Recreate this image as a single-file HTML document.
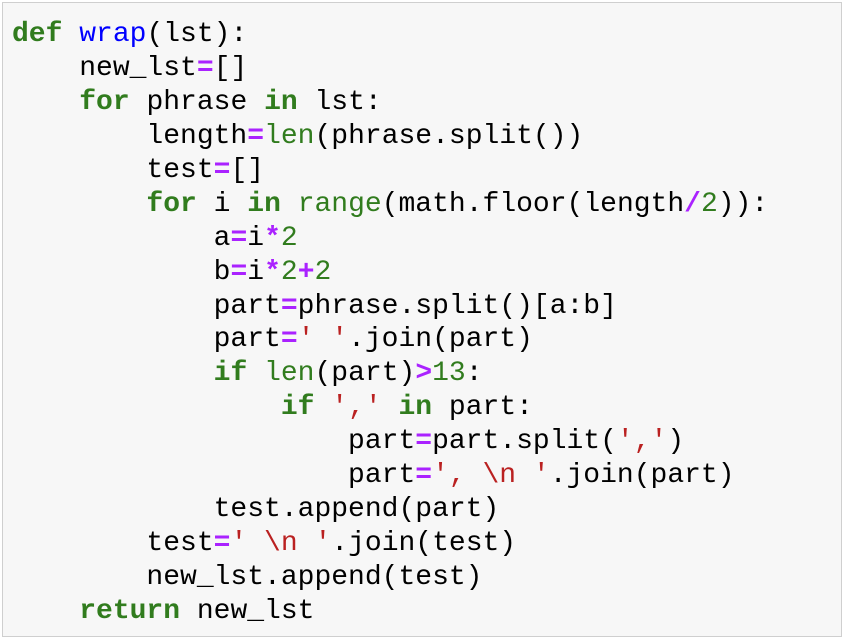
<!DOCTYPE html>
<html><head><style>
html,body{margin:0;padding:0;background:#fff;width:844px;height:640px;overflow:hidden}
.cell{position:absolute;left:2px;top:2px;width:840px;height:635px;border:1px solid #cfcfcf;background:#f7f7f7;box-sizing:border-box}
pre{margin:0;position:absolute;left:9px;top:15px;font-family:"Liberation Mono",monospace;font-size:28px;line-height:33.94px;color:#000}
.k{color:#317c1e;font-weight:bold}
.f{color:#0000ff}
.o{color:#aa22ff;font-weight:bold}
.s{color:#ba2121}
.n{color:#317c1e}
.b{color:#317c1e}
</style></head><body>
<div class="cell"><pre><span class="k">def</span> <span class="f">wrap</span>(lst):
    new_lst<span class="o">=</span>[]
    <span class="k">for</span> phrase <span class="k">in</span> lst:
        length<span class="o">=</span><span class="b">len</span>(phrase.split())
        test<span class="o">=</span>[]
        <span class="k">for</span> i <span class="k">in</span> <span class="b">range</span>(math.floor(length<span class="o">/</span><span class="n">2</span>)):
            a<span class="o">=</span>i<span class="o">*</span><span class="n">2</span>
            b<span class="o">=</span>i<span class="o">*</span><span class="n">2</span><span class="o">+</span><span class="n">2</span>
            part<span class="o">=</span>phrase.split()[a:b]
            part<span class="o">=</span><span class="s">' '</span>.join(part)
            <span class="k">if</span> <span class="b">len</span>(part)<span class="o">&gt;</span><span class="n">13</span>:
                <span class="k">if</span> <span class="s">','</span> <span class="k">in</span> part:
                    part<span class="o">=</span>part.split(<span class="s">','</span>)
                    part<span class="o">=</span><span class="s">', \n '</span>.join(part)
            test.append(part)
        test<span class="o">=</span><span class="s">' \n '</span>.join(test)
        new_lst.append(test)
    <span class="k">return</span> new_lst</pre></div>
</body></html>
